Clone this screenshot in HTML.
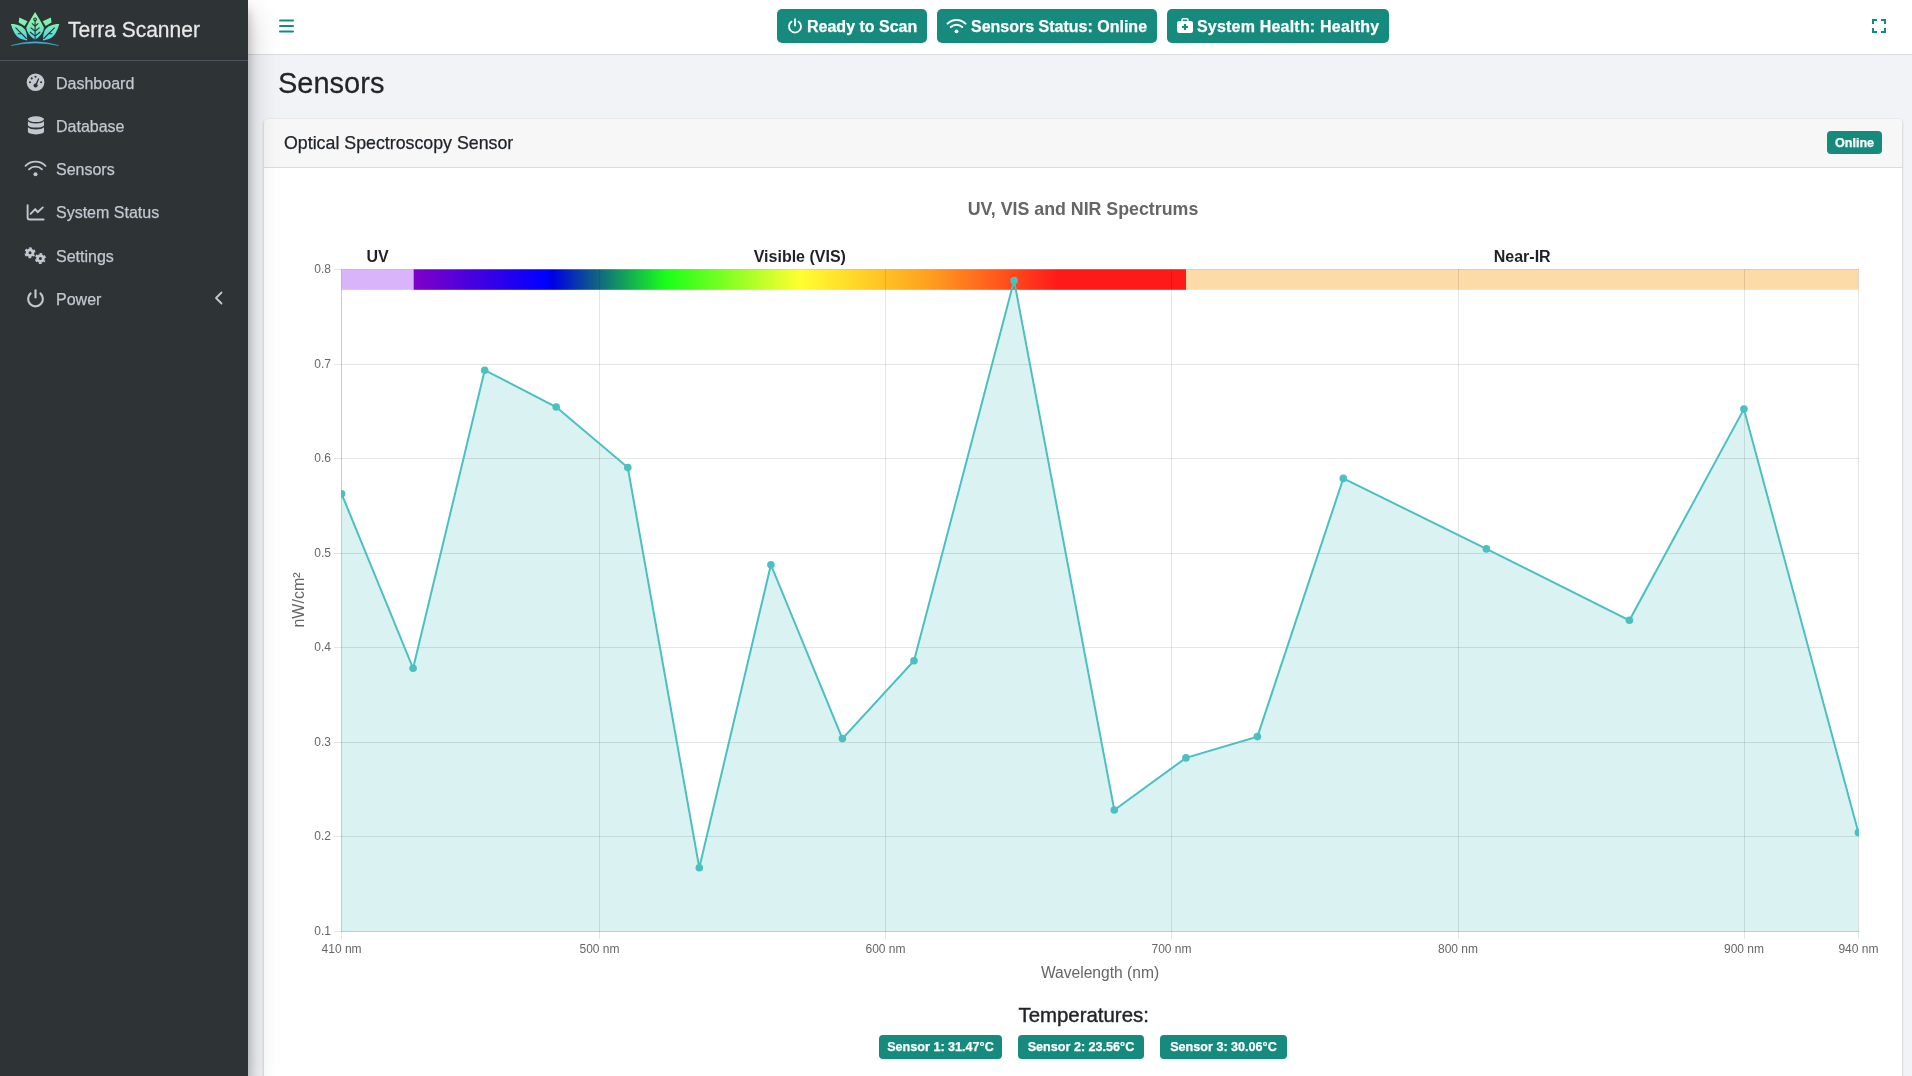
<!DOCTYPE html>
<html><head><meta charset="utf-8"><title>Terra Scanner - Sensors</title>
<style>
*{box-sizing:border-box;margin:0;padding:0}
html,body{width:1912px;height:1076px;overflow:hidden;background:#f2f3f7;}
body{will-change:transform;-webkit-text-stroke:0.25px currentColor;font-family:"Liberation Sans",sans-serif;color:#212529}
.abs{position:absolute}
.t{position:absolute;line-height:1;white-space:nowrap}
#sidebar{position:absolute;left:0;top:0;width:248px;height:1076px;background:#2e3336;z-index:20;box-shadow:0 14px 28px rgba(0,0,0,.25),0 10px 10px rgba(0,0,0,.22)}
#brandline{position:absolute;left:0;top:60px;width:248px;height:1px;background:#4b545c}
.nav{position:absolute;left:56px;font-size:16px;color:#c2c7d0;line-height:1;white-space:nowrap}
#navbar{position:absolute;left:248px;top:0;width:1664px;height:55px;background:#fff;border-bottom:1px solid #d9dce0;z-index:5}
.btn{position:absolute;z-index:6;top:9px;height:34px;border-radius:5px;background:#178a7e;color:#fff;font-weight:bold;font-size:16px}
.btn span{position:absolute;top:9.6px;line-height:1;white-space:nowrap}
.btn svg{position:absolute}
#card{position:absolute;left:264px;top:119px;width:1638px;height:1000px;background:#fff;border-radius:4px;box-shadow:0 0 1px rgba(0,0,0,.125),0 1px 3px rgba(0,0,0,.2)}
#cardhead{position:absolute;left:0;top:0;width:1638px;height:49px;background:#f7f7f7;border-bottom:1px solid #dcdcdc;border-radius:4px 4px 0 0}
.badge{position:absolute;height:24px;border-radius:4px;background:#178a7e;color:#fff;font-weight:bold;font-size:12.6px}
.badge span{position:absolute;left:0;right:0;text-align:center;top:6px;line-height:1;white-space:nowrap}
</style></head>
<body>

<div id="navbar">
  <svg class="abs" style="left:31px;top:19px" width="15" height="14" viewBox="0 0 15 14"><g fill="#178a7e"><rect x="0" y="0.5" width="15" height="2" rx="1"/><rect x="0" y="6" width="15" height="2" rx="1"/><rect x="0" y="11.5" width="15" height="2" rx="1"/></g></svg>
</div>

<div class="btn" style="left:777px;width:150px">
  <svg style="left:10px;top:9px" width="16" height="16" viewBox="0 0 16 16"><path d="M4.6 3.6A6 6 0 1 0 11.4 3.6" fill="none" stroke="#fff" stroke-width="1.8" stroke-linecap="round"/><path d="M8 1.2V7.6" stroke="#fff" stroke-width="1.8" stroke-linecap="round"/></svg>
  <span style="left:30px">Ready to Scan</span>
</div>
<div class="btn" style="left:937px;width:220px">
  <svg style="left:9px;top:9px" width="21" height="16" viewBox="0 0 21 16"><g fill="none" stroke="#fff" stroke-width="2" stroke-linecap="round"><path d="M1.5 5.6A13 13 0 0 1 19.5 5.6"/><path d="M4.8 9A8.2 8.2 0 0 1 16.2 9"/></g><circle cx="10.5" cy="13.3" r="1.9" fill="#fff"/></svg>
  <span style="left:34px">Sensors Status: Online</span>
</div>
<div class="btn" style="left:1167px;width:222px">
  <svg style="left:10px;top:9px" width="16" height="15" viewBox="0 0 16 15"><path d="M5 3.4V2C5 1.2 5.5 .7 6.3 .7h3.4c.8 0 1.3.5 1.3 1.3v1.4" fill="none" stroke="#fff" stroke-width="1.4"/><rect x="0" y="3" width="16" height="12" rx="2.2" fill="#fff"/><path d="M8 6V12M5 9H11" stroke="#178a7e" stroke-width="2.2"/></svg>
  <span style="left:30px;letter-spacing:0.2px">System Health: Healthy</span>
</div>

<svg class="abs" style="left:1872px;top:19px;z-index:6" width="14" height="14" viewBox="0 0 14 14"><g fill="none" stroke="#178a7e" stroke-width="2"><path d="M1 5V1H5M9 1H13V5M13 9V13H9M5 13H1V9"/></g></svg>

<div id="sidebar">
  <svg class="abs" style="left:8px;top:8px" width="54" height="42" viewBox="0 0 54 42">
    <defs><linearGradient id="lg" x1="0" y1="4" x2="0" y2="32" gradientUnits="userSpaceOnUse"><stop offset="0" stop-color="#90f7a2"/><stop offset=".45" stop-color="#7eefb0"/><stop offset="1" stop-color="#4cd3ec"/></linearGradient>
    <linearGradient id="lg2" x1="0" y1="33" x2="0" y2="38" gradientUnits="userSpaceOnUse"><stop offset="0" stop-color="#3cbde0"/><stop offset="1" stop-color="#2f9fc0"/></linearGradient></defs>
    <g fill="url(#lg)">
      <path d="M27.1 3.9C29.5 8 33 13 35.9 19.5C35.6 24 32 29 27.1 31.6C22.2 29 18.6 24 18.3 19.5C21.2 13 24.7 8 27.1 3.9Z"/>
      <path d="M11.3 9.4L19.5 13.3L16.6 18L10.7 14.6Z"/>
      <path d="M42.9 9.4L34.7 13.3L37.6 18L43.5 14.6Z"/>
      <path d="M2.9 16C9 15.8 15 18 17.5 22.5C19 26 19.3 29.5 19.1 32.4C13.5 31.8 9 29.5 6.5 25C4.8 22 3.6 19 2.9 16Z"/>
      <path d="M51.3 16C45.2 15.8 39.2 18 36.7 22.5C35.2 26 34.9 29.5 35.1 32.4C40.7 31.8 45.2 29.5 47.7 25C49.4 22 50.6 19 51.3 16Z"/>
    </g>
    <g fill="none" stroke="#2e3237" stroke-width="1.1" stroke-linecap="round">
      <path d="M27.1 12.9V31M24.2 15.6L27.1 18.2L30 15.6M23 19.9L27.1 23.2L31.2 19.9M22.3 24.2L27.1 28.1L31.9 24.2"/>
      <circle cx="27.1" cy="11.3" r="1.3"/>
      <path d="M7.8 19.9L18.4 30.5M10.2 25.8H13.6"/>
      <path d="M46.4 19.9L35.8 30.5M44 25.8H40.6"/>
    </g>
    <path d="M3.1 37.6Q27.1 29.8 50.8 37.6Q27.1 32.5 3.1 37.6Z" fill="url(#lg2)" stroke="#3ab6d9" stroke-width=".4"/>
  </svg>
  <div class="t" style="left:68px;top:18.9px;font-size:21px;color:#e8e8e8;transform:scaleY(1.06);transform-origin:0 0.85em">Terra Scanner</div>
  <div id="brandline"></div>

  <!-- nav icons -->
  <svg class="abs" style="left:26px;top:73px" width="19" height="19" viewBox="0 0 19 19"><circle cx="9.55" cy="9.25" r="8.85" fill="#c2c7d0"/><g fill="#2e3336"><circle cx="5.7" cy="5.4" r="1.05"/><circle cx="9.5" cy="3.7" r="1.05"/><circle cx="4" cy="9.3" r="1.05"/><circle cx="15.1" cy="9.3" r="1.05"/><circle cx="9.6" cy="12.5" r="2.1"/><path d="M8.9 12.3L12.2 5.2L13.3 5.7L10.4 13Z"/></g></svg>
  <div class="nav" style="top:75.7px">Dashboard</div>

  <svg class="abs" style="left:27px;top:116px" width="18" height="19" viewBox="0 0 18 19"><g fill="#c2c7d0"><ellipse cx="8.95" cy="3.2" rx="8.05" ry="2.9"/><path d="M0.9 5.3C2.4 6.9 5.4 7.4 8.95 7.4S15.5 6.9 17 5.3V9.4C15.5 11 12.5 11.5 8.95 11.5S2.4 11 0.9 9.4Z"/><path d="M0.9 11.3C2.4 12.9 5.4 13.4 8.95 13.4S15.5 12.9 17 11.3V15.6C17 17.3 13.5 18.4 8.95 18.4S0.9 17.3 0.9 15.6Z"/></g></svg>
  <div class="nav" style="top:118.9px">Database</div>

  <svg class="abs" style="left:24px;top:160px" width="23" height="17" viewBox="0 0 23 17"><g fill="none" stroke="#c2c7d0" stroke-width="1.8" stroke-linecap="round"><path d="M1.5 5.8A14 14 0 0 1 21.5 5.8"/><path d="M5 9.4A9 9 0 0 1 18 9.4"/></g><circle cx="11.5" cy="14.3" r="2" fill="#c2c7d0"/></svg>
  <div class="nav" style="top:162.1px">Sensors</div>

  <svg class="abs" style="left:26px;top:204px" width="19" height="17" viewBox="0 0 19 17"><g fill="none" stroke="#c2c7d0" stroke-width="1.9" stroke-linejoin="round" stroke-linecap="round"><path d="M1.6 1.3V13.4Q1.6 15.5 3.7 15.5H17.6"/><path d="M4.6 9.8L9.2 5.1L11.6 8.2L16.8 3.4"/></g></svg>
  <div class="nav" style="top:205.3px">System Status</div>

  <svg class="abs" style="left:24px;top:246px" width="23" height="19" viewBox="0 0 23 19"><g fill="#c2c7d0"><circle cx="6" cy="6.8" r="4.3"/><circle cx="6" cy="6.8" r="4.6" fill="none" stroke="#c2c7d0" stroke-width="1.9" stroke-dasharray="2.5 2.317" stroke-dashoffset="1.25" stroke-linejoin="round" transform="rotate(30 6 6.8)"/><circle cx="16.4" cy="12.5" r="4.3"/><circle cx="16.4" cy="12.5" r="4.6" fill="none" stroke="#c2c7d0" stroke-width="1.9" stroke-dasharray="2.5 2.317" stroke-dashoffset="1.25" transform="rotate(30 16.4 12.5)"/></g><g fill="#2e3336"><circle cx="6" cy="6.8" r="1.5"/><circle cx="16.4" cy="12.5" r="1.5"/></g></svg>
  <div class="nav" style="top:248.5px">Settings</div>

  <svg class="abs" style="left:26px;top:289px" width="19" height="19" viewBox="0 0 19 19"><path d="M4.6 4.4A7.4 7.4 0 1 0 14.4 4.4" fill="none" stroke="#c2c7d0" stroke-width="2.1" stroke-linecap="round"/><path d="M9.5 1.3V8.4" stroke="#c2c7d0" stroke-width="2.1" stroke-linecap="round"/></svg>
  <div class="nav" style="top:291.7px">Power</div>
  <svg class="abs" style="left:213px;top:291px" width="11" height="14" viewBox="0 0 11 14"><path d="M8.5 1.5L3 7L8.5 12.5" fill="none" stroke="#c2c7d0" stroke-width="1.8" stroke-linecap="round" stroke-linejoin="round"/></svg>
</div>

<div class="t" style="left:278px;top:68.6px;font-size:29px;color:#212529;transform:scaleY(1.02);transform-origin:0 0.85em">Sensors</div>

<div id="card">
  <div id="cardhead">
    <div class="t" style="left:20px;top:16.3px;font-size:17.8px;color:#212529">Optical Spectroscopy Sensor</div>
    <div class="badge" style="left:1563px;top:12px;width:55px;height:23px"><span style="top:5.5px">Online</span></div>
  </div>
</div>

<!-- CHART -->
<svg id="chart" class="abs" style="left:0;top:0;z-index:3" width="1912" height="1076" viewBox="0 0 1912 1076" font-family="Liberation Sans, sans-serif">
<defs><clipPath id="pc"><rect x="341" y="269" width="1518" height="663"/></clipPath>
<linearGradient id="spec" x1="413.6" y1="0" x2="1186" y2="0" gradientUnits="userSpaceOnUse"><stop offset="0" stop-color="#8000c8"/><stop offset="0.1714" stop-color="#0000ff"/><stop offset="0.1805" stop-color="#0000e4"/><stop offset="0.2400" stop-color="#106880"/><stop offset="0.3268" stop-color="#1aff1a"/><stop offset="0.5" stop-color="#ffff30"/><stop offset="0.6667" stop-color="#ffa020"/><stop offset="0.8333" stop-color="#ff1a1a"/><stop offset="1" stop-color="#ff1a1a"/></linearGradient></defs>
<path d="M341.6,931.3 L341.6,493.8 L413.1,668.3 L484.7,370.2 L556.2,407.0 L627.8,467.6 L699.3,867.8 L770.9,564.7 L842.4,738.6 L914.0,660.8 L1014.1,280.6 L1114.3,810.0 L1185.9,757.9 L1257.4,736.6 L1343.3,478.4 L1486.4,548.9 L1629.4,620.3 L1743.9,409.1 L1858.4,832.6 L1858.4,931.3Z" fill="rgba(75,192,192,0.2)" clip-path="url(#pc)"/>
<rect x="341.6" y="269.3" width="72" height="20.5" fill="#dab4fb"/>
<rect x="413.6" y="269.3" width="772.4" height="20.5" fill="url(#spec)"/>
<rect x="1186" y="269.3" width="672.4" height="20.5" fill="#fddba8"/>
<path d="M334,269.5H1859 M334,364.5H1859 M334,458.5H1859 M334,553.5H1859 M334,647.5H1859 M334,742.5H1859 M334,836.5H1859 M599.5,269V939 M885.5,269V939 M1171.5,269V939 M1458.5,269V939 M1744.5,269V939 M1858.5,269V939" stroke="rgba(0,0,0,0.1)" stroke-width="1" fill="none"/>
<path d="M341.5,931V939 M334,931.5H341" stroke="rgba(0,0,0,0.1)" stroke-width="1" fill="none"/>
<path d="M341.5,269V931 M341,931.5H1859" stroke="rgba(0,0,0,0.2)" stroke-width="1" fill="none"/>
<polyline points="341.6,493.8 413.1,668.3 484.7,370.2 556.2,407.0 627.8,467.6 699.3,867.8 770.9,564.7 842.4,738.6 914.0,660.8 1014.1,280.6 1114.3,810.0 1185.9,757.9 1257.4,736.6 1343.3,478.4 1486.4,548.9 1629.4,620.3 1743.9,409.1 1858.4,832.6" fill="none" stroke="rgb(75,192,192)" stroke-width="2" stroke-linejoin="miter" clip-path="url(#pc)"/>
<g fill="rgb(75,192,192)" clip-path="url(#pc)"><circle cx="341.6" cy="493.8" r="3.8"/><circle cx="413.1" cy="668.3" r="3.8"/><circle cx="484.7" cy="370.2" r="3.8"/><circle cx="556.2" cy="407.0" r="3.8"/><circle cx="627.8" cy="467.6" r="3.8"/><circle cx="699.3" cy="867.8" r="3.8"/><circle cx="770.9" cy="564.7" r="3.8"/><circle cx="842.4" cy="738.6" r="3.8"/><circle cx="914.0" cy="660.8" r="3.8"/><circle cx="1014.1" cy="280.6" r="3.8"/><circle cx="1114.3" cy="810.0" r="3.8"/><circle cx="1185.9" cy="757.9" r="3.8"/><circle cx="1257.4" cy="736.6" r="3.8"/><circle cx="1343.3" cy="478.4" r="3.8"/><circle cx="1486.4" cy="548.9" r="3.8"/><circle cx="1629.4" cy="620.3" r="3.8"/><circle cx="1743.9" cy="409.1" r="3.8"/><circle cx="1858.4" cy="832.6" r="3.8"/></g>
<g font-size="12" fill="#666" text-anchor="end"><text x="331" y="273.3">0.8</text><text x="331" y="368.3">0.7</text><text x="331" y="462.3">0.6</text><text x="331" y="557.3">0.5</text><text x="331" y="651.3">0.4</text><text x="331" y="746.3">0.3</text><text x="331" y="840.3">0.2</text><text x="331" y="935.3">0.1</text></g>
<g font-size="12" fill="#666" text-anchor="middle"><text x="341.6" y="953">410 nm</text><text x="599.5" y="953">500 nm</text><text x="885.5" y="953">600 nm</text><text x="1171.5" y="953">700 nm</text><text x="1458.0" y="953">800 nm</text><text x="1744.0" y="953">900 nm</text><text x="1858.4" y="953">940 nm</text></g>
<text x="1100" y="978" font-size="15.6" fill="#666" text-anchor="middle">Wavelength (nm)</text>
<text transform="translate(304,600) rotate(-90)" font-size="16" fill="#666" text-anchor="middle">nW/cm²</text>
<text x="1083" y="215" font-size="17.8" font-weight="bold" fill="#666" text-anchor="middle">UV, VIS and NIR Spectrums</text>
<g font-size="16" font-weight="bold" fill="#1e2125" text-anchor="middle"><text x="377.6" y="262">UV</text><text x="799.8" y="262">Visible (VIS)</text><text x="1522.2" y="262">Near-IR</text></g>
</svg>

<div class="t" style="left:1018.5px;top:1005px;font-size:20.4px;color:#212529;-webkit-text-stroke:0.4px #212529;z-index:4">Temperatures:</div>
<div class="badge" style="left:879px;top:1035px;width:123px;z-index:4"><span>Sensor 1: 31.47°C</span></div>
<div class="badge" style="left:1018px;top:1035px;width:126px;z-index:4"><span>Sensor 2: 23.56°C</span></div>
<div class="badge" style="left:1160px;top:1035px;width:127px;z-index:4"><span>Sensor 3: 30.06°C</span></div>

</body></html>
